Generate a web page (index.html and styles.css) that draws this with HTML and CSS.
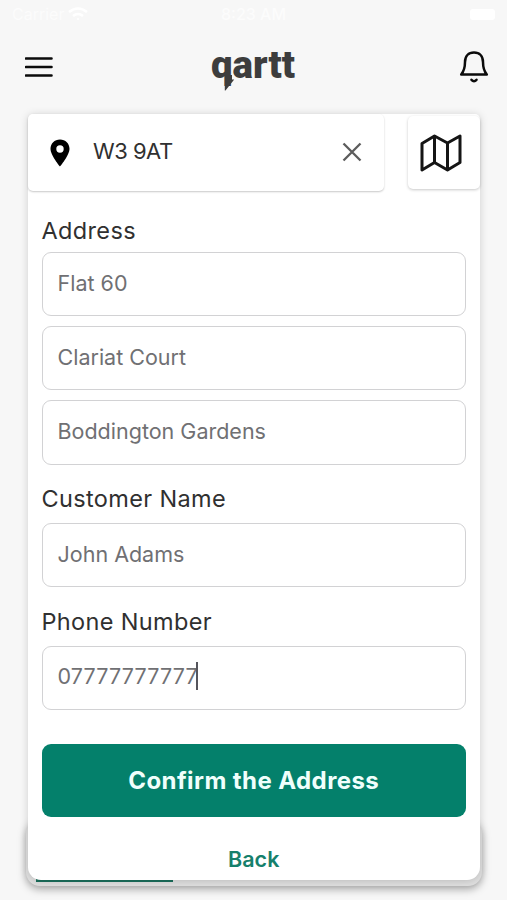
FILE: index.html
```html
<!DOCTYPE html>
<html lang="en">
<head>
<meta charset="utf-8">
<title>qartt – Address</title>
<link rel="stylesheet" href="styles.css">
</head>
<body>
<div class="screen">
  <div class="status">
    <span class="carrier">Carrier
      <svg width="20" height="14" viewBox="0 0 20 14" fill="none" stroke="#fff" stroke-width="2.6"><path d="M1 5Q10-2 19 5M5 9Q10 5 15 9"/><circle cx="10" cy="12" r="1" fill="#fff" stroke="none"/></svg>
    </span>
    <span class="time">8:23 AM</span>
    <span class="battery"></span>
  </div>
  <header class="topbar">
    <svg class="menu" width="28" height="22" viewBox="0 0 28 22" stroke="#0b0b0b" stroke-width="2.6" stroke-linecap="round"><path d="M1 2.5h25.500M1 11h25.500M1 19.500h25.500"/></svg>
    <svg class="logo" width="86" height="46" viewBox="0 0 86 46"><text x="0" y="30.500" textLength="84" lengthAdjust="spacingAndGlyphs">qartt</text><path d="M13.800 28h7.200v4.500h2.200L14.500 43.500h-.7z"/></svg>
    <svg class="bell" width="30" height="34" viewBox="0 0 30 34" fill="none" stroke="#0b0b0b" stroke-width="2.5" stroke-linejoin="round" stroke-linecap="round"><path d="M2.200 24.500C5.500 20.500 6 17 6 12C6 6 9.500 2.500 15 2.500S24 6 24 12C24 17 24.500 20.500 27.800 24.500Z"/><path d="M12.500 29.800Q15 32.600 17.500 29.800"/></svg>
  </header>
  <div class="under"><div class="under-bar"></div></div>
  <main class="card">
    <div class="search-row">
      <div class="search">
        <svg class="pin" width="20" height="28" viewBox="0 0 20 28"><path fill="#000" fill-rule="evenodd" d="M10 .5C4.500.5.500 4.600.500 9.800.500 16.500 10 27.500 10 27.500S19.500 16.500 19.500 9.800C19.500 4.600 15.500.5 10 .5ZM10 6.300a3.700 3.700 0 1 1 0 7.400 3.700 3.700 0 0 1 0-7.400Z"/></svg>
        <span class="postcode">W3 9AT</span>
        <svg class="clear" width="20" height="20" viewBox="0 0 20 20" stroke="#5c5c5c" stroke-width="2.300"><path d="M1.500 1.500l17 17M18.500 1.500l-17 17"/></svg>
      </div>
      <div class="map">
        <svg width="42" height="38" viewBox="0 0 42 38" fill="none" stroke="#151515" stroke-width="3" stroke-linejoin="round"><path d="M2 9.500L14.500 2L27.500 9L40 2V28.500L27.500 36L14.500 28.500L2 36ZM14.500 2V28.500M27.500 9V36"/></svg>
      </div>
    </div>
    <div class="form">
      <section class="group">
        <div class="label l-address">Address</div>
        <div class="field">Flat 60</div>
        <div class="field">Clariat Court</div>
        <div class="field">Boddington Gardens</div>
      </section>
      <section class="group">
        <div class="label">Customer Name</div>
        <div class="field">John Adams</div>
      </section>
      <section class="group">
        <div class="label">Phone Number</div>
        <div class="field phone">07777777777<span class="caret"></span></div>
      </section>
      <div class="confirm">Confirm the Address</div>
      <div class="back">Back</div>
    </div>
  </main>
</div>
</body>
</html>
```

FILE: styles.css
```css
* { box-sizing: border-box; }
body { margin: 0; background: #f7f7f7; font-family: Inter, "Liberation Sans", sans-serif; }
.screen { position: relative; width: 507px; height: 900px; overflow: hidden; background: #f7f7f7; }
.status { display: grid; grid-template-columns: 1fr auto 1fr; align-items: center; height: 28px; padding: 0 12px; color: #fcfcfc; font-size: 16px; }
.carrier { display: flex; align-items: center; gap: 4px; }
.time { font-weight: 500; }
.battery { justify-self: end; width: 25px; height: 11px; border-radius: 3px; background: #fff; }
.topbar { display: flex; justify-content: space-between; height: 86px; padding: 19px 17px 0 25px; }
.menu { margin-top: 9px; margin-left: -.5px; }
.logo { overflow: visible; margin-right: 4px; fill: #3d3d3d; }
.logo text { font-family: Roboto, sans-serif; font-size: 38px; font-weight: 900; }
.bell { margin-top: 3px; margin-right: 1px; margin-left: -1px; }
.under { position: absolute; left: 26px; top: 820px; width: 456px; height: 66px; border-radius: 14px; background: #e0e0e0; box-shadow: 0 3px 9px rgba(0,0,0,.35); }
.under-bar { position: absolute; left: 10px; bottom: 4px; width: 137px; height: 4px; background: #1b6f5c; }
.card { position: relative; width: 452px; height: 766px; margin-left: 28px; border-radius: 5px 5px 13px 13px; background: #fff; box-shadow: 0 1px 8px rgba(0,0,0,.17); }
.search-row { display: flex; justify-content: space-between; height: 77px; }
.search { display: flex; align-items: center; width: 356px; height: 77px; padding: 0 22px; border-radius: 5px; background: #fff; box-shadow: 0 1px 2px rgba(0,0,0,.22); }
.postcode { flex: 1; margin: -3px 0 0 23px; font-size: 22px; line-height: 28px; letter-spacing: -.5px; color: #303030; }
.clear { margin-top: -1px; }
.map { display: flex; align-items: center; justify-content: center; width: 72px; height: 73px; margin-top: 2px; padding-right: 7px; border-radius: 5px; background: #fff; box-shadow: 0 1px 3px rgba(0,0,0,.22); }
.form { padding: 26px 14px 0 13.500px; }
.group { display: flex; flex-direction: column; gap: 10px; margin-bottom: 20.500px; }
.label { height: 28px; font-size: 23.500px; line-height: 28px; letter-spacing: .35px; color: #303030; }
.l-address { margin-bottom: -3px; }
.field { display: flex; align-items: center; height: 64.200px; padding: 0 15px 3px; border: 1.500px solid #d2d2d4; border-radius: 9px; font-size: 21.500px; letter-spacing: 0; color: #707073; }
.phone { letter-spacing: .15px; }
.caret { width: 2px; height: 28px; margin-left: -2px; background: #55555c; }
.confirm { display: flex; align-items: center; justify-content: center; height: 73px; margin-top: 34px; border-radius: 9px; background: #04806b; color: #f0fffc; font-size: 24px; font-weight: 700; letter-spacing: .42px; }
.back { margin-top: 28.500px; text-align: center; font-size: 21.500px; font-weight: 600; line-height: 28px; color: #16806c; }
```
